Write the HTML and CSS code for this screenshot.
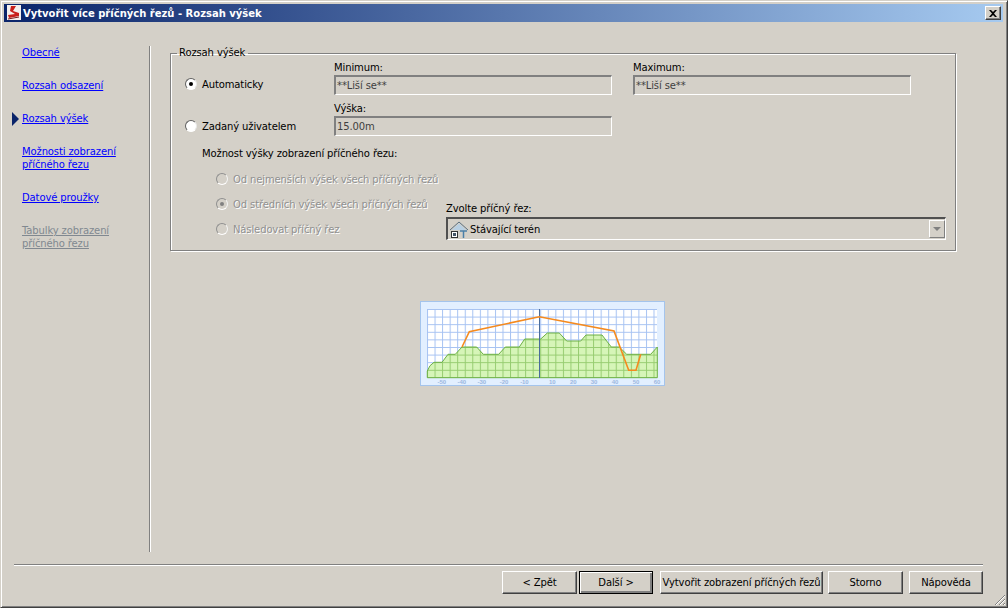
FILE: index.html
```html
<!DOCTYPE html>
<html lang="cs">
<head>
  <meta charset="UTF-8">
  <title>Vytvořit více příčných řezů - Rozsah výšek</title>
  <link rel="stylesheet" href="styles.css">
</head>
<body>

  <div class="window">
    <div class="titlebar">
      <svg class="title-icon" width="16" height="16" viewBox="0 0 16 16">
        <rect x="1" y="0" width="14" height="15" fill="#f4f0ee"/>
        <path d="M5 1 L10 1 L7 6 L13 8 L13 11 L3 13 L2 10 L9 9 L4 6 Z" fill="#c8201c"/>
        <path d="M2 14 L13 12" stroke="#7a1a18" stroke-width="1"/>
      </svg>
      <span class="title-text">Vytvořit více příčných řezů - Rozsah výšek</span>
      <button class="close-btn"><svg width="8" height="7" viewBox="0 0 8 7"><path d="M0 0 L2 0 L4 2 L6 0 L8 0 L5 3.5 L8 7 L6 7 L4 5 L2 7 L0 7 L3 3.5 Z" fill="#000"/></svg></button>
    </div>

    <div class="main">
      <nav class="sidebar">
        <a class="nav-link" href="#">Obecné</a>
        <a class="nav-link" href="#">Rozsah odsazení</a>
        <a class="nav-link current" href="#">Rozsah výšek</a>
        <a class="nav-link" href="#">Možnosti zobrazení příčného řezu</a>
        <a class="nav-link" href="#">Datové proužky</a>
        <a class="nav-link disabled" href="#">Tabulky zobrazení příčného řezu</a>
      </nav>

      <div class="content">
        <fieldset class="group">
          <legend>Rozsah výšek</legend>

          <div class="range-row">
            <div class="radio-line auto"><span class="radio checked"></span>Automaticky</div>
            <div class="field">
              <label>Minimum:</label>
              <div class="readonly">**Liší se**</div>
            </div>
            <div class="field">
              <label>Maximum:</label>
              <div class="readonly">**Liší se**</div>
            </div>
          </div>

          <div class="range-row second">
            <div class="radio-line"><span class="radio"></span>Zadaný uživatelem</div>
            <div class="field">
              <label>Výška:</label>
              <div class="readonly">15.00m</div>
            </div>
          </div>

          <div class="option-title">Možnost výšky zobrazení příčného řezu:</div>

          <div class="option-row">
            <div class="options">
              <div class="radio-line off"><span class="radio"></span>Od nejmenších výšek všech příčných řezů</div>
              <div class="radio-line off"><span class="radio checked"></span>Od středních výšek všech příčných řezů</div>
              <div class="radio-line off"><span class="radio"></span>Následovat příčný řez</div>
            </div>
            <div class="picker">
              <label>Zvolte příčný řez:</label>
              <div class="combo">
                <svg class="combo-icon" width="20" height="19" viewBox="0 0 20 19">
                  <path d="M1 10 L10 2 L19 10" fill="none" stroke="#5a6f80" stroke-width="1"/>
                  <path d="M3 10 L10 3.5 L17 10 Z" fill="#b8d0e4"/>
                  <rect x="2.5" y="11.5" width="6" height="6" fill="#fff" stroke="#333"/>
                  <rect x="4" y="13" width="3" height="3" fill="#456"/>
                  <path d="M11 11 H18 M14.5 11 V18" stroke="#4a7fa8" stroke-width="1.5"/>
                </svg>
                <span class="combo-text">Stávající terén</span>
                <span class="combo-btn"></span>
              </div>
            </div>
          </div>
        </fieldset>

        <svg class="preview" width="245" height="85" viewBox="0 0 245 85">
          <defs>
            <pattern id="gridlines" x="7" y="8" width="7.55" height="7.6" patternUnits="userSpaceOnUse">
              <path d="M0 0.5 H7.55 M0.5 0 V7.6" stroke="#a6c2f2" stroke-width="1" fill="none"/>
            </pattern>
            <pattern id="gridfill" x="7" y="8" width="7.55" height="7.6" patternUnits="userSpaceOnUse">
              <path d="M0 0.5 H7.55 M0.5 0 V7.6" stroke="#96cc70" stroke-width="1" fill="none"/>
            </pattern>
          </defs>
          <rect x="0.5" y="0.5" width="244" height="84" fill="#e2efff" stroke="#a4c4ec"/>
          <rect x="7" y="8" width="230" height="69" fill="#fff"/>
          <rect x="7" y="8" width="230" height="69" fill="url(#gridlines)"/>
          <path d="M7.3 70 L10 64.7 L14 61.3 L22 61.3 L28 53.3 L35.3 53.3 L42 46 L56.7 46 L63.3 53.3 L78.7 53.3 L85.3 46 L99.3 46 L104.7 38 L120.7 38 L127.3 32 L139.3 32 L146.7 40 L160.7 40 L166 34 L182 34 L191.3 46 L199.3 46 L206.7 53.3 L230.7 53.3 L237.3 46 L237.3 76.7 L7.3 76.7 Z" fill="#d6f5b8"/>
          <path d="M7.3 70 L10 64.7 L14 61.3 L22 61.3 L28 53.3 L35.3 53.3 L42 46 L56.7 46 L63.3 53.3 L78.7 53.3 L85.3 46 L99.3 46 L104.7 38 L120.7 38 L127.3 32 L139.3 32 L146.7 40 L160.7 40 L166 34 L182 34 L191.3 46 L199.3 46 L206.7 53.3 L230.7 53.3 L237.3 46 L237.3 76.7 L7.3 76.7 Z" fill="url(#gridfill)" stroke="#6cb044" stroke-width="1"/>
          <path d="M119.5 8 V77" stroke="#4a6c9c" stroke-width="1"/>
          <path d="M42 46 L49.3 30.7 L119.3 15.7 L194 30 L208.7 69.3 L216 69.3 L220.7 53.3" fill="none" stroke="#f58a1e" stroke-width="1.6"/>
          <g class="axis">
            <text x="21.7" y="83">-50</text>
            <text x="41.7" y="83">-40</text>
            <text x="61.7" y="83">-30</text>
            <text x="84" y="83">-20</text>
            <text x="104.3" y="83">-10</text>
            <text x="132.3" y="83">10</text>
            <text x="153.3" y="83">20</text>
            <text x="174" y="83">30</text>
            <text x="195" y="83">40</text>
            <text x="216" y="83">50</text>
            <text x="237" y="83">60</text>
          </g>
        </svg>
      </div>
    </div>

    <div class="footer">
      <button class="btn back">&lt; Zpět</button>
      <button class="btn default next">Další &gt;</button>
      <button class="btn create">Vytvořit zobrazení příčných řezů</button>
      <button class="btn cancel">Storno</button>
      <button class="btn help">Nápověda</button>
    </div>

    <svg class="grip" width="12" height="12" viewBox="0 0 12 12">
      <path d="M11 1 L1 11 M11 5 L5 11 M11 9 L9 11" stroke="#808080" stroke-width="1"/>
      <path d="M11 2 L2 11 M11 6 L6 11 M11 10 L10 11" stroke="#fff" stroke-width="1"/>
    </svg>
  </div>

</body>
</html>
```

FILE: styles.css
```css
* {
  box-sizing: border-box;
}
html, body {
  margin: 0;
  padding: 0;
}
body {
  width: 1008px;
  height: 608px;
  overflow: hidden;
  font-family: "DejaVu Sans", sans-serif;
  font-size: 10px;
  letter-spacing: -0.12px;
  color: #000;
  background: #d4d0c8;
}
.window {
  position: relative;
  width: 1008px;
  height: 608px;
  display: flex;
  flex-direction: column;
  padding: 3px 4px 2px 3px;
  background: #d4d0c8;
  border-style: solid;
  border-width: 1px;
  border-color: #d4d0c8 #404040 #404040 #d4d0c8;
  box-shadow: inset 1px 1px 0 #fff, inset -1px -1px 0 #808080;
}

/* title bar */
.titlebar {
  height: 18px;
  flex: none;
  display: flex;
  align-items: center;
  padding: 0 2px 0 2px;
  background: linear-gradient(to right, #0a246a, #a6caf0);
  color: #fff;
}
.title-icon {
  flex: none;
}
.title-text {
  margin-left: 1px;
  font-weight: bold;
  font-size: 10px;
  letter-spacing: 0;
  white-space: nowrap;
}
.close-btn {
  margin-left: auto;
  width: 16px;
  height: 14px;
  padding: 0;
  display: flex;
  align-items: center;
  justify-content: center;
  background: #d4d0c8;
  border: 1px solid;
  border-color: #fff #404040 #404040 #fff;
  box-shadow: inset -1px -1px 0 #808080;
}

/* left navigation */
.main {
  flex: 1;
  display: flex;
  min-height: 0;
}
.sidebar {
  width: 146px;
  margin: 24px 0 12px;
  padding: 0 18px 0 18px;
  flex: none;
  display: flex;
  flex-direction: column;
  gap: 20px;
  border-right: 1px solid #808080;
  box-shadow: 1px 0 0 #fff;
  line-height: 13px;
}
.nav-link {
  position: relative;
  display: block;
  color: #0000ff;
}
.nav-link.current::before {
  content: "";
  position: absolute;
  left: -10px;
  top: 0;
  border-style: solid;
  border-width: 7px 0 7px 7px;
  border-color: transparent transparent transparent #0a246a;
}
.nav-link.disabled {
  color: #808890;
}

/* right side */
.content {
  flex: 1;
  padding: 24px 47px 0 20px;
  display: flex;
  flex-direction: column;
}
.group {
  width: 100%;
  height: 205px;
  margin: 0;
  padding: 0 0 0 14px;
  border: 1px solid #808080;
  box-shadow: 1px 1px 0 #fff, inset 1px 1px 0 #fff;
}
.group legend {
  margin-left: -8px;
  padding: 0 3px 0 2px;
  line-height: 14px;
}
.range-row {
  display: grid;
  grid-template-columns: 128px 278px 278px;
  column-gap: 21px;
  align-items: end;
  padding-top: 1px;
}
.range-row.second {
  padding-top: 0;
  margin-top: 7px;
}
.field label {
  display: block;
  line-height: 13px;
  height: 13px;
  margin-bottom: 1px;
}
.readonly {
  height: 20px;
  padding: 2px 0 0 1px;
  line-height: 14px;
  color: #404040;
  background: #d4d0c8;
  border-style: solid;
  border-width: 2px 1px 1px 2px;
  border-color: #808080 #fff #fff #808080;
  outline: 1px solid #d4d0c8;
}
.radio-line {
  display: flex;
  align-items: center;
  gap: 4px;
  height: 20px;
  white-space: nowrap;
}
.radio-line.auto {
  margin-bottom: 1px;
}
.radio {
  position: relative;
  width: 12px;
  height: 12px;
  flex: none;
  margin-right: 1px;
  border-radius: 50%;
  background: #fff;
  border: 1px solid;
  border-color: #606060 #e8e8e8 #fff #606060;
}
.radio.checked::after {
  content: "";
  position: absolute;
  left: 3px;
  top: 3px;
  width: 4px;
  height: 4px;
  border-radius: 50%;
  background: #000;
}
.radio-line.off {
  color: #909090;
  text-shadow: 1px 1px 0 #fff;
}
.radio-line.off .radio {
  background: #d4d0c8;
  border-color: #909090 #f4f4f4 #fff #909090;
}
.radio-line.off .radio.checked::after {
  background: #808080;
}
.option-title {
  margin: 11px 0 0 17px;
  line-height: 13px;
}
.option-row {
  display: flex;
  align-items: flex-end;
  margin-left: 31px;
}
.options {
  width: 230px;
  margin-top: 9px;
  flex: none;
  display: flex;
  flex-direction: column;
  gap: 5px;
}
.picker {
  width: 500px;
  margin-bottom: -1px;
}
.picker label {
  display: block;
  line-height: 13px;
  margin-bottom: 2px;
}
.combo {
  height: 23px;
  display: flex;
  align-items: center;
  padding-left: 1px;
  background: #d4d0c8;
  border-style: solid;
  border-width: 2px 1px 1px 2px;
  border-color: #505050 #fff #fff #505050;
}
.combo-icon {
  flex: none;
}
.combo-text {
  margin-left: 1px;
}
.combo-btn {
  position: relative;
  width: 16px;
  height: 18px;
  margin-left: auto;
  background: #d4d0c8;
  border: 1px solid;
  border-color: #fff #808080 #808080 #fff;
}
.combo-btn::after {
  content: "";
  position: absolute;
  left: 3px;
  top: 6px;
  border-style: solid;
  border-width: 4px 4px 0 4px;
  border-color: #808080 transparent transparent transparent;
}

/* picture under the group */
.preview {
  margin: 50px 0 0 250px;
  flex: none;
}
.axis text {
  font-family: "Liberation Sans", sans-serif;
  font-size: 6px;
  font-weight: bold;
  fill: #9db8e0;
  text-anchor: middle;
}

/* bottom buttons */
.footer {
  height: 41px;
  flex: none;
  display: flex;
  margin: 0 20px 0 10px;
  padding-top: 6px;
  border-top: 1px solid #808080;
  box-shadow: inset 0 1px 0 #fff;
  justify-content: flex-end;
}
.btn {
  height: 23px;
  padding: 0;
  font: inherit;
  letter-spacing: inherit;
  color: #000;
  background: #d4d0c8;
  border: 1px solid;
  border-color: #fff #404040 #404040 #fff;
  box-shadow: inset -1px -1px 0 #808080;
  white-space: nowrap;
}
.btn.default {
  border-color: #000;
  box-shadow: inset 1px 1px 0 #fff, inset -2px -2px 0 #808080;
}
.back { width: 75px; }
.next { width: 74px; margin-left: 2px; }
.create { width: 163px; margin-left: 7px; }
.cancel { width: 75px; margin-left: 5px; }
.help { width: 74px; margin-left: 6px; }
.grip {
  position: absolute;
  right: 1px;
  bottom: 1px;
}
```
